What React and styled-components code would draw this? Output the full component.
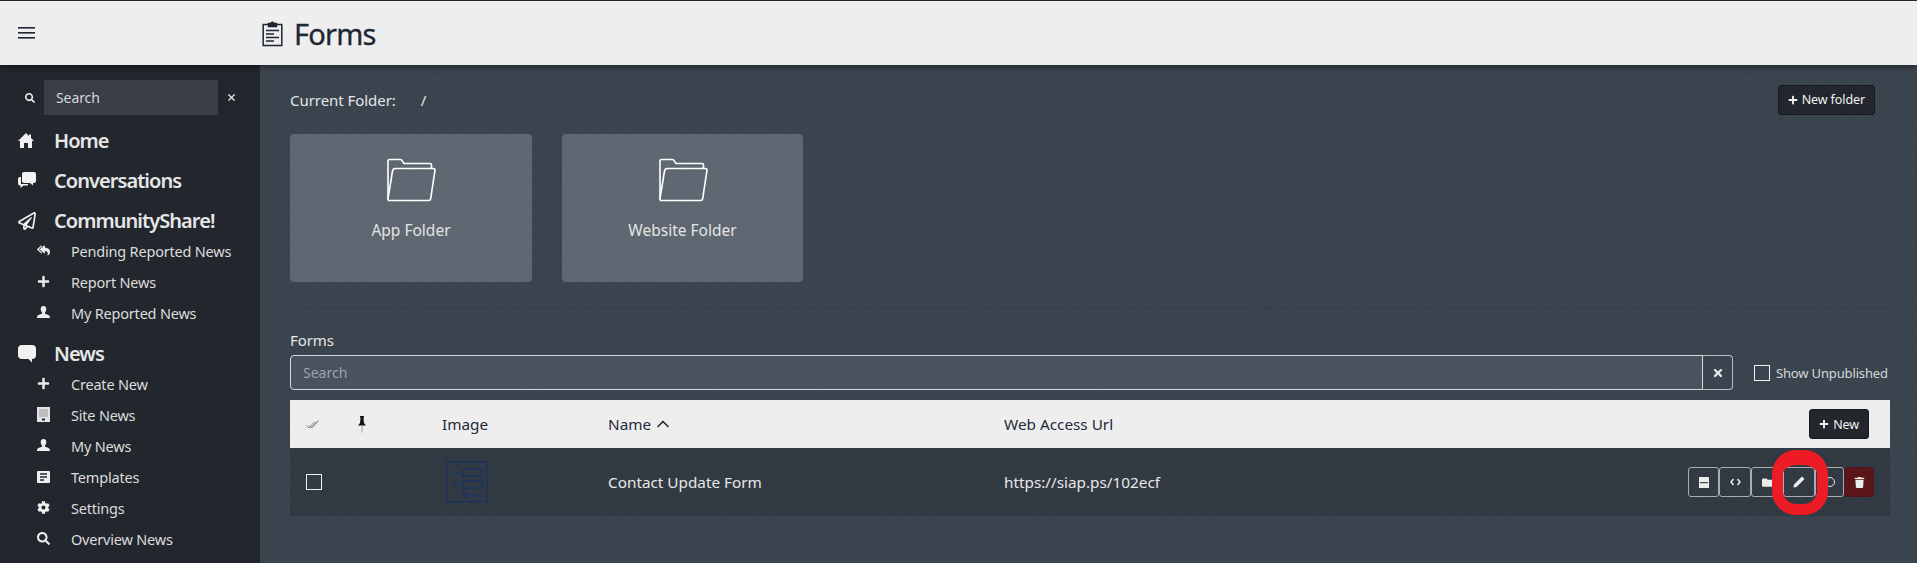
import React from 'react';
import styled, { createGlobalStyle } from 'styled-components';
import {
  FaRegPaperPlane,
  FaReplyAll,
  FaPlus,
  FaCog,
  FaSearch,
  FaTimes,
  FaFolder,
  FaTrash,
} from 'react-icons/fa';
import { X, ChevronUp, RotateCcw } from 'lucide-react';

const texture = `
  background-image:
    repeating-linear-gradient(45deg, rgba(255, 255, 255, 0.014) 0 1px, transparent 1px 3px),
    repeating-linear-gradient(-45deg, rgba(0, 0, 0, 0.035) 0 1px, transparent 1px 3px);
`;

const GlobalStyle = createGlobalStyle`
  html, body {
    margin: 0;
    padding: 0;
    height: 100%;
    overflow: hidden;
    background: #3a444e;
  }
  * {
    box-sizing: border-box;
  }
  body {
    font-family: 'Noto Sans', 'Open Sans', sans-serif;
    font-size: 15px;
    color: #e8e8e8;
  }
`;

const Page = styled.div`
  width: 1917px;
  height: 563px;
  display: flex;
  flex-direction: column;
  overflow: hidden;
`;

const Header = styled.header`
  height: 65px;
  flex-shrink: 0;
  display: flex;
  align-items: center;
  background: #eeeeee;
  border-top: 1px solid #22272e;
  color: #1d2733;
  box-shadow: 0 2px 6px rgba(0, 0, 0, 0.45);
  position: relative;
  z-index: 1;
`;

const MenuSlot = styled.div`
  width: 262px;
  padding-left: 18px;
  display: flex;
  align-items: center;
`;

const Title = styled.h1`
  margin: 0;
  display: flex;
  align-items: center;
  gap: 11px;
  font-size: 29px;
  font-weight: 400;
  line-height: 1;
  letter-spacing: -0.8px;
  -webkit-text-stroke: 0.3px #1d2733;
`;

const Body = styled.div`
  flex: 1;
  display: flex;
  min-height: 0;
`;

const Sidebar = styled.nav`
  width: 260px;
  flex-shrink: 0;
  background: #22272e;
  padding: 15px 0 0 18px;
`;

const SideSearch = styled.div`
  display: flex;
  align-items: center;
  height: 35px;
  margin-bottom: 1px;
  color: #f0f0f0;

  > svg:first-child {
    font-size: 10px;
    margin: 0 9px 0 7px;
  }
  > svg:last-child {
    margin-left: 8px;
  }
`;

const SideInput = styled.div`
  width: 174px;
  height: 35px;
  padding-left: 12px;
  display: flex;
  align-items: center;
  background: #383d46;
  font-size: 14px;
  letter-spacing: -0.1px;
  color: #d5d7da;
`;

const MainItem = styled.div`
  height: 31px;
  margin-top: 9px;
  padding-top: 2px;
  display: flex;
  align-items: center;
  font-size: 20px;
  font-weight: 600;
  letter-spacing: -0.95px;
  color: #e6e6e6;
`;

const MainIcon = styled.span`
  width: 36px;
  display: flex;
  color: #f0f0f0;
  font-size: 18px;
`;

const SubItem = styled.div`
  height: 31px;
  display: flex;
  align-items: center;
  font-size: 14.5px;
  letter-spacing: -0.2px;
  color: #dcdcdc;
  padding-left: 19px;
`;

const SubIcon = styled.span`
  width: 34px;
  display: flex;
  color: #eeeeee;
  font-size: 13px;
`;

const Main = styled.main`
  flex: 1;
  min-width: 0;
  padding: 0 27px 0 30px;
  background-color: #3a444e;
  ${texture}
`;

const FolderBar = styled.div`
  height: 69px;
  display: flex;
  align-items: center;
  font-size: 15px;
  letter-spacing: -0.05px;
  color: #e6e6e6;
`;

const FolderPath = styled.span`
  margin-left: 25px;
  flex: 1;
`;

const DarkButton = styled.button`
  height: 30px;
  display: inline-flex;
  align-items: center;
  gap: 4px;
  padding: 0 ${(p) => p.$pad}px;
  margin-right: ${(p) => p.$gap}px;
  border: 1px solid #171a1f;
  border-radius: 3px;
  background: #22272e;
  color: #f2f2f2;
  font-family: inherit;
  font-size: 12.5px;
  letter-spacing: -0.1px;

  svg {
    font-size: 10px;
  }
`;

const FolderGrid = styled.div`
  display: flex;
  gap: 30px;
  padding-bottom: 26px;
  border-bottom: 1px solid #353e48;
`;

const FolderCard = styled.div`
  width: ${(p) => p.$width}px;
  height: 148px;
  padding-top: 24px;
  display: flex;
  flex-direction: column;
  align-items: center;
  gap: 17px;
  border-radius: 4px;
  background-color: #5f6872;
  ${texture}
  font-size: 15.5px;
  color: #e4e4e4;
`;

const SectionLabel = styled.div`
  margin-top: 18px;
  height: 28px;
  line-height: 26px;
  font-size: 15px;
  letter-spacing: -0.1px;
  color: #e6e6e6;
`;

const SearchRow = styled.div`
  display: flex;
  align-items: center;
  margin-bottom: 10px;
`;

const SearchField = styled.div`
  flex: 1;
  height: 35px;
  display: flex;
  align-items: center;
  padding-left: 12px;
  border: 1px solid #d8d8d8;
  border-radius: 4px 0 0 4px;
  background: #4a525f;
  font-size: 14px;
  color: #9ea3aa;
`;

const ClearButton = styled.div`
  width: 30px;
  height: 35px;
  display: flex;
  align-items: center;
  justify-content: center;
  border: 1px solid #b8bdc2;
  border-left: 0;
  border-radius: 0 4px 4px 0;
  color: #e8e8e8;
  font-size: 12px;
`;

const Publish = styled.label`
  width: 157px;
  padding-left: 21px;
  display: flex;
  align-items: center;
  gap: 6px;
  font-size: 13px;
  letter-spacing: -0.15px;
  color: #d5d7da;
  white-space: nowrap;
`;

const Box = styled.span`
  width: 16px;
  height: 16px;
  flex-shrink: 0;
  border: 1px solid #f0f0f0;
`;

const Row = styled.div`
  display: grid;
  grid-template-columns: 52px 84px 166px 396px 1fr auto;
  align-items: center;
  padding: 0 ${(p) => p.$right}px 0 16px;
  height: ${(p) => p.$height}px;
  background-color: ${(p) => (p.$head ? '#eeeeee' : '#313943')};
  color: ${(p) => (p.$head ? '#1d2b3c' : '#e8e8e8')};
  font-size: 15.3px;
  ${(p) => (p.$head ? '' : texture)}
`;

const SortName = styled.span`
  display: flex;
  align-items: center;
  gap: 2px;
`;

const Thumb = styled.svg`
  width: 42px;
  height: 42px;
  margin-left: 4px;
  display: block;
`;

const Actions = styled.div`
  display: flex;
  position: relative;
`;

const ActionButton = styled.div`
  width: ${(p) => p.$width}px;
  height: 30px;
  display: flex;
  align-items: center;
  justify-content: center;
  border: 1px solid ${(p) => (p.$danger ? '#4d1519' : '#a9adb2')};
  border-radius: 3px;
  background: ${(p) => (p.$danger ? '#5a1519' : 'transparent')};
  color: #ececec;
  font-size: 11px;
`;

const Ring = styled.span`
  position: absolute;
  left: 84px;
  top: -17px;
  width: 56px;
  height: 65px;
  border: 11px solid #ed1c24;
  border-top-width: 15px;
  border-radius: 24px;
  pointer-events: none;
`;

const MenuIcon = () => (
  <svg width="17" height="12" viewBox="0 0 17 12" fill="#1d2733">
    <rect y="0" width="17" height="1.6" />
    <rect y="5" width="17" height="1.6" />
    <rect y="10" width="17" height="1.6" />
  </svg>
);

const ClipboardIcon = () => (
  <svg width="21" height="27" viewBox="0 0 21 27" fill="none" stroke="#1d2733" strokeWidth="1.5">
    <path d="M6 4.500H1.200v21h18.600v-21H15" />
    <path d="M6.500 6.500V3.500h2.300a1.800 1.800 0 0 1 3.400 0h2.300v3z" fill="#1d2733" />
    <path d="M4 10.500h13M4 14h8M4 17.500h13M4 21h8" strokeWidth="1.300" />
  </svg>
);

const FolderIcon = () => (
  <svg width="50" height="44" viewBox="0 0 50 44" fill="none" stroke="#ffffff" strokeWidth="1.600" strokeLinejoin="round">
    <path d="M2 42V3a1.500 1.500 0 0 1 1.500-1.500h11a1.500 1.500 0 0 1 1.200.6L18 5.500h26a1.500 1.500 0 0 1 1.500 1.500v3" />
    <path d="M2 40.500 6.500 13a3 3 0 0 1 3-2.500h38a1.500 1.500 0 0 1 1.500 1.700l-4.300 28.500a2 2 0 0 1-2 1.800H3.500A1.500 1.500 0 0 1 2 40.500z" />
  </svg>
);

const HomeIcon = () => (
  <svg width="16" height="15" viewBox="0 0 16 15" fill="#f2f2f2">
    <path d="M8 0l3 3V1.500h2V5l3 3h-2v7h-4v-5H6v5H2V8H0z" />
  </svg>
);

const ChatIcon = () => (
  <svg width="18" height="17" viewBox="0 0 18 17" fill="#f2f2f2">
    <path d="M2 5h1v7h7v1.500H5.500L2.500 16v-2.500H2A2 2 0 0 1 0 11.500V7a2 2 0 0 1 2-2z" />
    <path d="M6 0h10a2 2 0 0 1 2 2v7a2 2 0 0 1-2 2h-1v2.500L12 11H6a2 2 0 0 1-2-2V2a2 2 0 0 1 2-2z" />
  </svg>
);

const BubbleIcon = () => (
  <svg width="18" height="18" viewBox="0 0 18 18" fill="#f2f2f2">
    <path d="M4 0h10a4 4 0 0 1 4 4v6a4 4 0 0 1-4 4v3.500L10.500 14H4a4 4 0 0 1-4-4V4a4 4 0 0 1 4-4z" />
  </svg>
);

const UserIcon = () => (
  <svg width="13" height="13" viewBox="0 0 13 13" fill="#eeeeee">
    <path d="M6.500 0C8.300 0 9.300 1.300 9.300 3c0 1.500-.6 2.800-1.400 3.600v1.100c2 .6 5.100 1.500 5.100 3.300v1H0v-1c0-1.800 3.100-2.700 5.100-3.300V6.600C4.300 5.800 3.700 4.500 3.700 3c0-1.700 1-3 2.800-3z" />
  </svg>
);

const BuildingIcon = () => (
  <svg width="13" height="15" viewBox="0 0 13 15">
    <rect width="13" height="15" fill="#e4e4e4" />
    <rect x="2" y="2" width="9" height="8" fill="#bdbdbd" />
    <rect x="5" y="11.500" width="3" height="2" fill="#22272e" />
  </svg>
);

const TemplateIcon = () => (
  <svg width="13" height="12" viewBox="0 0 13 12">
    <rect width="13" height="12" rx="1" fill="#eeeeee" />
    <path d="M3 3h7M3 6h7M3 9h4" stroke="#22272e" strokeWidth="1.300" />
  </svg>
);

const CheckAllIcon = () => (
  <svg width="13" height="9" viewBox="0 0 13 9" fill="none" stroke="#6b6f74" strokeWidth="0.900">
    <path d="M0.500 5.500 3 8 8.500 2" />
    <path d="M3.500 5.500 5.500 8 11 1.500" />
    <path d="M6.500 7 12.500 0.500" />
  </svg>
);

const PinIcon = () => (
  <svg width="8" height="17" viewBox="0 0 8 17">
    <path d="M2 0h4v1L5.500 2 6 7l2 2.500H0L2 7l.5-5L2 1z" fill="#10151d" />
    <rect x="3.500" y="9.500" width="1" height="7" fill="#9a9a9a" />
  </svg>
);

const MinusDocIcon = () => (
  <svg width="10" height="11" viewBox="0 0 10 11">
    <rect width="10" height="11" fill="#ececec" />
    <rect x="1" y="5" width="8" height="1.300" fill="#4a525f" />
  </svg>
);

const CodeIcon = () => (
  <svg width="11" height="8" viewBox="0 0 11 8" fill="none" stroke="#ececec" strokeWidth="1.500">
    <path d="M3.500 1 1 4l2.500 3M7.500 1 10 4 7.500 7" />
  </svg>
);

const PencilIcon = () => (
  <svg width="12" height="12" viewBox="0 0 12 12" fill="#ececec">
    <path d="M9 .5l2.500 2.500L3.500 11 .5 11.500 1 8.500z" />
  </svg>
);

const FormThumb = () => (
  <Thumb viewBox="0 0 42 42" fill="none" stroke="#213459" strokeWidth="1.800">
    <rect x="1" y="1" width="40" height="40" />
    <rect x="17" y="8" width="19" height="7" />
    <rect x="17" y="20" width="19" height="7" />
    <rect x="17" y="32" width="4.500" height="4.500" fill="#213459" />
    <path d="M7 12h7M7 23.500h7M25 34.500h11" />
  </Thumb>
);

const nav = [
  { icon: <HomeIcon />, label: 'Home' },
  { icon: <ChatIcon />, label: 'Conversations' },
  {
    icon: <FaRegPaperPlane />,
    label: 'CommunityShare!',
    children: [
      { icon: <FaReplyAll />, label: 'Pending Reported News' },
      { icon: <FaPlus />, label: 'Report News' },
      { icon: <UserIcon />, label: 'My Reported News' },
    ],
  },
  {
    icon: <BubbleIcon />,
    label: 'News',
    children: [
      { icon: <FaPlus />, label: 'Create New' },
      { icon: <BuildingIcon />, label: 'Site News' },
      { icon: <UserIcon />, label: 'My News' },
      { icon: <TemplateIcon />, label: 'Templates' },
      { icon: <FaCog />, label: 'Settings' },
      { icon: <FaSearch />, label: 'Overview News' },
    ],
  },
];

const actions = [
  { icon: <MinusDocIcon />, width: 31 },
  { icon: <CodeIcon />, width: 32 },
  { icon: <FaFolder />, width: 32 },
  { icon: <PencilIcon />, width: 32 },
  { icon: <RotateCcw size={12} strokeWidth={2} />, width: 29 },
  { icon: <FaTrash />, width: 30, danger: true },
];

export default function App() {
  return (
    <Page>
      <GlobalStyle />
      <Header>
        <MenuSlot>
          <MenuIcon />
        </MenuSlot>
        <Title>
          <ClipboardIcon />
          Forms
        </Title>
      </Header>
      <Body>
        <Sidebar>
          <SideSearch>
            <FaSearch />
            <SideInput>Search</SideInput>
            <X size={11} strokeWidth={2.5} />
          </SideSearch>
          {nav.map((item) => (
            <div key={item.label}>
              <MainItem>
                <MainIcon>{item.icon}</MainIcon>
                {item.label}
              </MainItem>
              {item.children &&
                item.children.map((child) => (
                  <SubItem key={child.label}>
                    <SubIcon>{child.icon}</SubIcon>
                    {child.label}
                  </SubItem>
                ))}
            </div>
          ))}
        </Sidebar>
        <Main>
          <FolderBar>
            Current Folder:
            <FolderPath>/</FolderPath>
            <DarkButton $pad={9} $gap={15}>
              <FaPlus />
              New folder
            </DarkButton>
          </FolderBar>
          <FolderGrid>
            <FolderCard $width={242}>
              <FolderIcon />
              App Folder
            </FolderCard>
            <FolderCard $width={241}>
              <FolderIcon />
              Website Folder
            </FolderCard>
          </FolderGrid>
          <SectionLabel>Forms</SectionLabel>
          <SearchRow>
            <SearchField>Search</SearchField>
            <ClearButton>
              <FaTimes />
            </ClearButton>
            <Publish>
              <Box />
              Show Unpublished
            </Publish>
          </SearchRow>
          <Row $head $height={48} $right={21}>
            <CheckAllIcon />
            <PinIcon />
            <span>Image</span>
            <SortName>
              Name
              <ChevronUp size={20} strokeWidth={2} />
            </SortName>
            <span>Web Access Url</span>
            <DarkButton $pad={9} $gap={0}>
              <FaPlus />
              New
            </DarkButton>
          </Row>
          <Row $height={68} $right={16}>
            <Box />
            <span />
            <FormThumb />
            <span>Contact Update Form</span>
            <span>https://siap.ps/102ecf</span>
            <Actions>
              {actions.map((action, i) => (
                <ActionButton key={i} $width={action.width} $danger={action.danger}>
                  {action.icon}
                </ActionButton>
              ))}
              <Ring />
            </Actions>
          </Row>
        </Main>
      </Body>
    </Page>
  );
}
